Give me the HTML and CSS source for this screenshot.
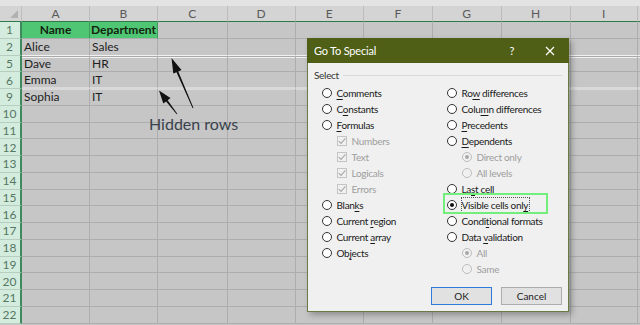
FILE: index.html
```html
<!DOCTYPE html>
<html>
<head>
<meta charset="utf-8">
<link rel="stylesheet" href="styles.css">
</head>
<body>
<div class="sheet">
  <div class="topstrip"></div>
  <div class="grid">
    <div class="corner"><i class="tri"></i></div>
    <div class="ch">A</div><div class="ch">B</div><div class="ch">C</div><div class="ch">D</div><div class="ch">E</div><div class="ch">F</div><div class="ch">G</div><div class="ch">H</div><div class="ch">I</div><div class="ch end"></div>

    <div class="rh">1</div><div class="c g">Name</div><div class="c g">Department</div><div class="c"></div><div class="c"></div><div class="c"></div><div class="c"></div><div class="c"></div><div class="c"></div><div class="c"></div><div class="c end"></div>
    <div class="rh">2</div><div class="c r2">Alice</div><div class="c r2">Sales</div><div class="c r2"></div><div class="c r2"></div><div class="c r2"></div><div class="c r2"></div><div class="c r2"></div><div class="c r2"></div><div class="c r2"></div><div class="c r2 end"></div>
    <div class="rh">5</div><div class="c r5">Dave</div><div class="c r5">HR</div><div class="c r5"></div><div class="c r5"></div><div class="c r5"></div><div class="c r5"></div><div class="c r5"></div><div class="c r5"></div><div class="c r5"></div><div class="c r5 end"></div>
    <div class="rh">6</div><div class="c r6">Emma</div><div class="c r6">IT</div><div class="c r6"></div><div class="c r6"></div><div class="c r6"></div><div class="c r6"></div><div class="c r6"></div><div class="c r6"></div><div class="c r6"></div><div class="c r6 end"></div>
    <div class="rh">9</div><div class="c r9">Sophia</div><div class="c r9">IT</div><div class="c r9"></div><div class="c r9"></div><div class="c r9"></div><div class="c r9"></div><div class="c r9"></div><div class="c r9"></div><div class="c r9"></div><div class="c r9 end"></div>
    <div class="rh">10</div><div class="c"></div><div class="c"></div><div class="c"></div><div class="c"></div><div class="c"></div><div class="c"></div><div class="c"></div><div class="c"></div><div class="c"></div><div class="c end"></div>
    <div class="rh">11</div><div class="c"></div><div class="c"></div><div class="c"></div><div class="c"></div><div class="c"></div><div class="c"></div><div class="c"></div><div class="c"></div><div class="c"></div><div class="c end"></div>
    <div class="rh">12</div><div class="c"></div><div class="c"></div><div class="c"></div><div class="c"></div><div class="c"></div><div class="c"></div><div class="c"></div><div class="c"></div><div class="c"></div><div class="c end"></div>
    <div class="rh">13</div><div class="c"></div><div class="c"></div><div class="c"></div><div class="c"></div><div class="c"></div><div class="c"></div><div class="c"></div><div class="c"></div><div class="c"></div><div class="c end"></div>
    <div class="rh">14</div><div class="c"></div><div class="c"></div><div class="c"></div><div class="c"></div><div class="c"></div><div class="c"></div><div class="c"></div><div class="c"></div><div class="c"></div><div class="c end"></div>
    <div class="rh">15</div><div class="c"></div><div class="c"></div><div class="c"></div><div class="c"></div><div class="c"></div><div class="c"></div><div class="c"></div><div class="c"></div><div class="c"></div><div class="c end"></div>
    <div class="rh">16</div><div class="c"></div><div class="c"></div><div class="c"></div><div class="c"></div><div class="c"></div><div class="c"></div><div class="c"></div><div class="c"></div><div class="c"></div><div class="c end"></div>
    <div class="rh">17</div><div class="c"></div><div class="c"></div><div class="c"></div><div class="c"></div><div class="c"></div><div class="c"></div><div class="c"></div><div class="c"></div><div class="c"></div><div class="c end"></div>
    <div class="rh">18</div><div class="c"></div><div class="c"></div><div class="c"></div><div class="c"></div><div class="c"></div><div class="c"></div><div class="c"></div><div class="c"></div><div class="c"></div><div class="c end"></div>
    <div class="rh">19</div><div class="c"></div><div class="c"></div><div class="c"></div><div class="c"></div><div class="c"></div><div class="c"></div><div class="c"></div><div class="c"></div><div class="c"></div><div class="c end"></div>
    <div class="rh">20</div><div class="c"></div><div class="c"></div><div class="c"></div><div class="c"></div><div class="c"></div><div class="c"></div><div class="c"></div><div class="c"></div><div class="c"></div><div class="c end"></div>
    <div class="rh">21</div><div class="c"></div><div class="c"></div><div class="c"></div><div class="c"></div><div class="c"></div><div class="c"></div><div class="c"></div><div class="c"></div><div class="c"></div><div class="c end"></div>
    <div class="rh">22</div><div class="c"></div><div class="c"></div><div class="c"></div><div class="c"></div><div class="c"></div><div class="c"></div><div class="c"></div><div class="c"></div><div class="c"></div><div class="c end"></div>
  </div>

  <svg class="arrows" width="640" height="325" viewBox="0 0 640 325">
    <polygon points="171.5,58 181.5,70 178.3,71.4 193.4,107.8 192.6,108.2 176.5,72.2 173.3,73.6" fill="#111"/>
    <polygon points="159,90.5 170.5,98.1 167.7,100.2 177.3,113.8 176.7,114.2 166.1,101.4 163.3,103.5" fill="#111"/>
  </svg>
  <div class="note">Hidden rows</div>

  <div class="dlg">
    <div class="dlg-title">
      <span class="ttl">Go To Special</span>
      <span class="q">?</span>
      <svg class="xic" width="10" height="10" viewBox="0 0 10 10"><path d="M1 1L9 9M9 1L1 9" stroke="#fff" stroke-width="1.2" fill="none"/></svg>
    </div>
    <div class="dlg-body">
      <div class="grp"><span class="grp-l">Select</span><span class="grp-line"></span></div>
      <div class="cols">
        <div class="col col1">
          <div class="opt"><i class="rb"></i><span><u>C</u>omments</span></div>
          <div class="opt"><i class="rb"></i><span>C<u>o</u>nstants</span></div>
          <div class="opt"><i class="rb"></i><span><u>F</u>ormulas</span></div>
          <div class="opt sub dis"><i class="cb"><svg width="10" height="10" viewBox="0 0 10 10"><path d="M1.8 5.2L4 7.4L8.4 2.4" stroke="#a8a8a8" stroke-width="1.1" fill="none"/></svg></i><span>Numbers</span></div>
          <div class="opt sub dis"><i class="cb"><svg width="10" height="10" viewBox="0 0 10 10"><path d="M1.8 5.2L4 7.4L8.4 2.4" stroke="#a8a8a8" stroke-width="1.1" fill="none"/></svg></i><span>Text</span></div>
          <div class="opt sub dis"><i class="cb"><svg width="10" height="10" viewBox="0 0 10 10"><path d="M1.8 5.2L4 7.4L8.4 2.4" stroke="#a8a8a8" stroke-width="1.1" fill="none"/></svg></i><span>Logicals</span></div>
          <div class="opt sub dis"><i class="cb"><svg width="10" height="10" viewBox="0 0 10 10"><path d="M1.8 5.2L4 7.4L8.4 2.4" stroke="#a8a8a8" stroke-width="1.1" fill="none"/></svg></i><span>Errors</span></div>
          <div class="opt"><i class="rb"></i><span>Blan<u>k</u>s</span></div>
          <div class="opt"><i class="rb"></i><span>Current <u>r</u>egion</span></div>
          <div class="opt"><i class="rb"></i><span>Current <u>a</u>rray</span></div>
          <div class="opt"><i class="rb"></i><span>Ob<u>j</u>ects</span></div>
        </div>
        <div class="col col2">
          <div class="opt"><i class="rb"></i><span>Ro<u>w</u> differences</span></div>
          <div class="opt"><i class="rb"></i><span>Colu<u>m</u>n differences</span></div>
          <div class="opt"><i class="rb"></i><span><u>P</u>recedents</span></div>
          <div class="opt"><i class="rb"></i><span><u>D</u>ependents</span></div>
          <div class="opt sub dis"><i class="rb on"></i><span>Direct only</span></div>
          <div class="opt sub dis"><i class="rb"></i><span>All levels</span></div>
          <div class="opt"><i class="rb"></i><span>La<u>s</u>t cell</span></div>
          <div class="opt"><i class="rb on"></i><span class="focus">Visible cells onl<u>y</u></span></div>
          <div class="opt"><i class="rb"></i><span>Condi<u>t</u>ional formats</span></div>
          <div class="opt"><i class="rb"></i><span>Data <u>v</u>alidation</span></div>
          <div class="opt sub dis"><i class="rb on"></i><span>All</span></div>
          <div class="opt sub dis"><i class="rb"></i><span>Same</span></div>
        </div>
      </div>
      <div class="btns">
        <div class="btn ok">OK</div>
        <div class="btn">Cancel</div>
      </div>
    </div>
    <div class="hl"></div>
  </div>
</div>
</body>
</html>
```

FILE: styles.css
```css
* { box-sizing: border-box; margin: 0; padding: 0; }
html, body { width: 640px; height: 325px; overflow: hidden; }
body { background: #c6c6c6; font-family: Lato, "Liberation Sans", sans-serif; }

.sheet { position: relative; width: 640px; height: 325px; overflow: hidden; background: #c6c6c6; }
.topstrip { height: 6px; background: #e3e3e3; }

.grid {
  display: grid;
  grid-template-columns: 22px 68px 68px 69.5px 68px 68.5px 69px 68.5px 69px 67.5px 2px;
  grid-template-rows: 16px repeat(18, 16.75px);
}

.corner { background: #d4d4d4; border-bottom: 1px solid #2f7a4c; border-right: 1px solid #bdbdbd; position: relative; }
.tri { position: absolute; right: 3px; bottom: 3px; width: 0; height: 0;
  border-left: 8px solid transparent; border-bottom: 8px solid #b1b1b1; }

.ch {
  background: #d4d4d4; border-right: 1px solid #bcbcbc; border-bottom: 1px solid #2f7a4c;
  color: #5a5a5a; font-size: 12px; display: flex; align-items: center; justify-content: center;
}
.ch.end { border-right: none; }

.rh {
  background: #d4ecdd; border-right: 2px solid #3f8a5c; border-bottom: 1px solid #b6cdbf;
  color: #557764; font-size: 12px; display: flex; align-items: center; justify-content: center;
  padding-right: 1px;
}

.c {
  border-right: 1px solid #adadad; border-bottom: 1px solid #adadad;
  font-size: 12px; color: #1e1e1e; padding-left: 2px;
  display: flex; align-items: center; white-space: nowrap; overflow: hidden;
}
.c.end { border-right: none; }
.c.g { background: #4fc673; border-right-color: #3e9d5c; font-weight: 700; justify-content: center; padding-left: 0; color: #14240f; }

.c.r2 { border-bottom: 1px solid #f2f2f2; }
.c.r5 { box-shadow: inset 0 1px 0 #a9a9a9, inset 0 2px 0 #f2f2f2; }
.c.r6 { border-bottom: 2px solid #d9d9d9; }
.c.r9 { box-shadow: inset 0 1px 0 #d9d9d9; }

.arrows { position: absolute; left: 0; top: 0; }
.note { position: absolute; left: 149px; top: 114px; font-size: 16px; line-height: 20px; color: #38424c; }

/* dialog */
.dlg {
  position: absolute; left: 307px; top: 38px; width: 262px; height: 274px;
  background: #f0f0f0; border: 1px solid #6b7a44;
  box-shadow: 3px 3px 6px rgba(0,0,0,0.28);
  display: flex; flex-direction: column;
  font-size: 10px; letter-spacing: -0.3px; color: #1a1a1a;
}
.dlg-title {
  height: 25px; background: #4f6016; color: #fff; flex: none;
  display: flex; align-items: center; padding-left: 7px; margin: -1px -1px 0 -1px;
}
.ttl { font-size: 11px; letter-spacing: -0.2px; flex: 1; }
.q { font-size: 11px; margin-right: 31px; }
.xic { margin-right: 14px; }

.dlg-body { flex: 1; display: flex; flex-direction: column; padding: 5px 6px 6px 6px; }
.grp { height: 14px; display: flex; align-items: center; }
.grp-l { color: #333; }
.grp-line { flex: 1; height: 1px; background: #d9d9d9; margin-left: 4px; margin-top: 1px; }

.cols { display: flex; padding-left: 8px; margin-top: 2.5px; }
.col1 { width: 125px; }
.col2 { flex: 1; }
.opt { height: 16px; display: flex; align-items: center; white-space: nowrap; }
.opt.sub { padding-left: 15px; }
.opt u { text-decoration-thickness: 1px; text-underline-offset: 1.5px; }
.opt.dis { color: #9e9e9e; }

.rb { display: block; width: 10px; height: 10px; border-radius: 50%; border: 1px solid #333; background: #fff; margin-right: 4.5px; flex: none; position: relative; }
.rb.on::after { content: ""; position: absolute; left: 2px; top: 2px; width: 4px; height: 4px; border-radius: 50%; background: #111; }
.dis .rb { border-color: #bdbdbd; background: #f0f0f0; }
.dis .rb.on::after { background: #a8a8a8; }

.cb { display: block; width: 10px; height: 10px; border: 1px solid #c4c4c4; background: #f0f0f0; margin-right: 4.5px; flex: none; position: relative; }
.cb svg { position: absolute; left: -1px; top: -1px; }

.focus { outline: 1px dotted #555; outline-offset: 0; padding: 1px 1px 1px 0; line-height: 12px; }

.btns { margin-top: auto; display: flex; justify-content: flex-end; gap: 9px; padding-right: 0px; }
.btn { width: 61px; height: 18px; background: #e1e1e1; border: 1px solid #adadad; display: flex; align-items: center; justify-content: center; color: #222; letter-spacing: 0; }
.btn.ok { border-color: #2d7bd8; }

.hl { position: absolute; left: 135px; top: 154px; width: 105px; height: 21px; border: 2px solid #72ef7a; }
```
